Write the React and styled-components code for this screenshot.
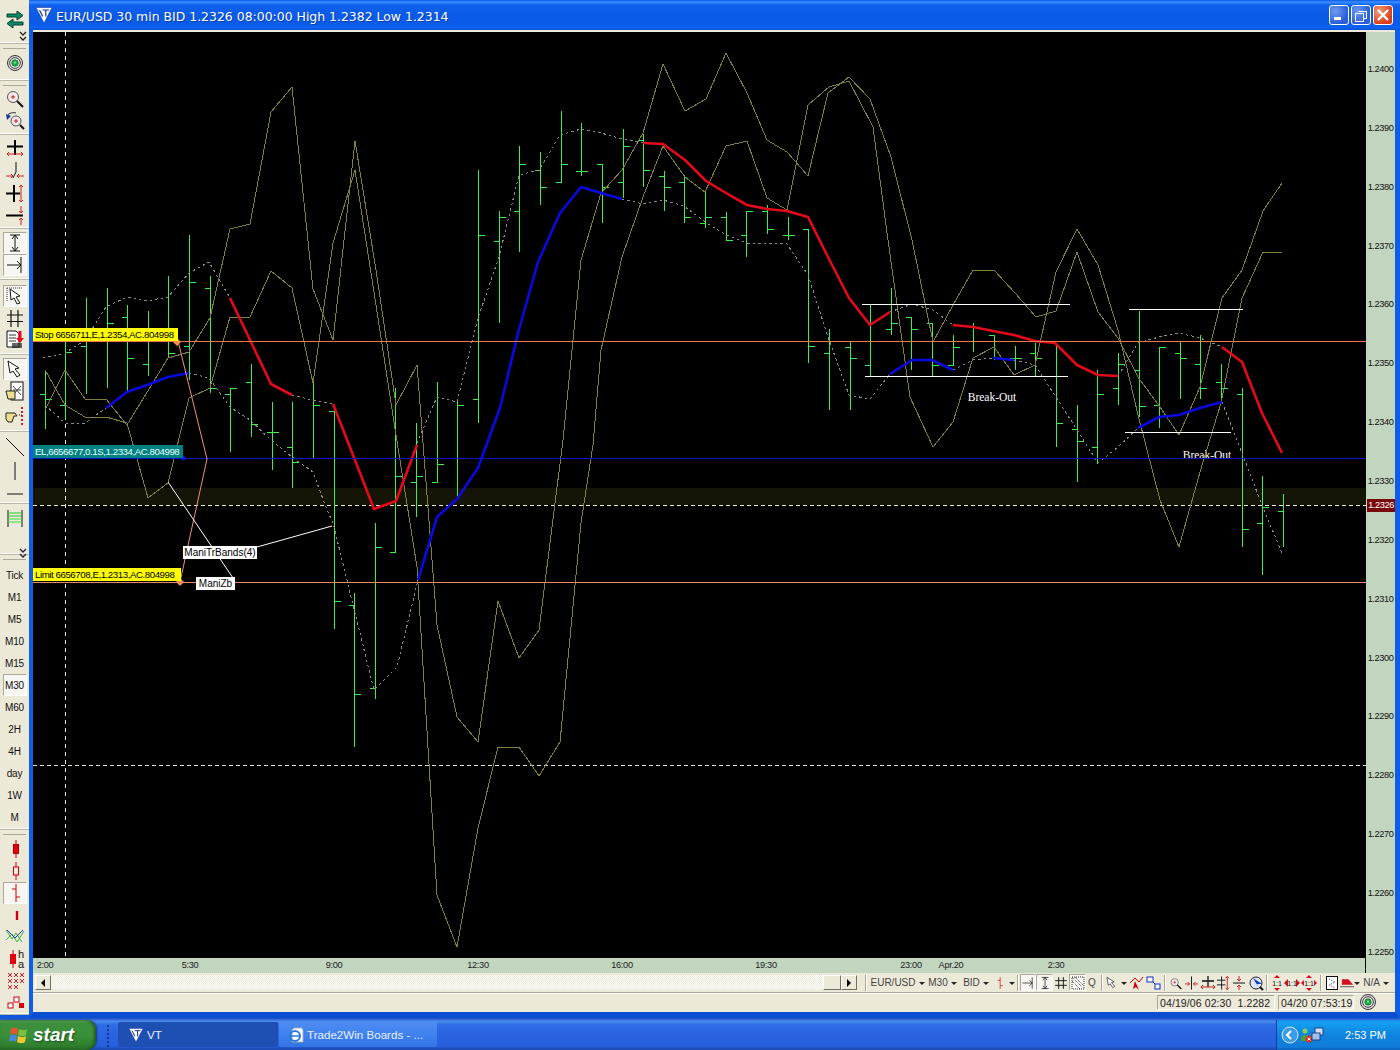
import React from 'react';
import styled, { createGlobalStyle } from 'styled-components';

const Global = createGlobalStyle`
  html, body { margin: 0; padding: 0; background: #000; }
  body { font-family: "Liberation Sans", Arial, sans-serif; }
`;

/* ---------- data ---------- */
const X = (i) => Math.round(44.6 + 20.64 * i) + 0.5;
const bars = [
  [370,429,394,399],[338,420,405,352],[298,394,346,null],[288,388,null,323],[305,392,317,358],[311,376,364,null],[276,358,null,353],[235,380,346,282],
  [276,393,288,388],[388,452,394,388],[364,437,382,424],[402,470,432,432],[402,488,447,462],[377,458,null,405],[411,629,411,601],[593,747,605,694],
  [523,699,688,547],[388,552,552,476],[423,517,482,476],[382,482,482,464],[400,498,null,405],[170,423,399,235],[211,323,241,217],[146,252,211,164],
  [152,205,170,187],[111,182,182,164],[123,176,171,171],[164,223,164,187],[129,198,182,146],[134,187,140,170],[171,211,176,187],[177,223,182,217],
  [192,228,223,217],[212,241,217,240],[211,257,235,211],[205,234,211,229],[217,240,235,235],[229,363,229,346],[329,410,353,null],[342,410,347,358],
  [305,377,365,null],[288,335,329,323],[317,370,317,329],[323,377,323,365],[335,365,365,347],[323,352,null,null],[335,360,335,358],[346,370,358,358],
  [343,377,353,358],[343,447,null,423],[405,482,429,441],[370,464,447,394],[353,405,388,364],[311,417,370,406],[347,428,405,347],[342,399,353,358],
  [335,399,364,388],[364,403,382,388],[388,547,394,529],[476,575,523,507],[494,547,511,null],
];
const pts = (a) => a.map((p) => p.join(',')).join(' ');
const olive = [
  [[45,370],[65,405],[85,417],[106,417],[127,423],[148,498],[168,483],[189,398],[210,388],[230,317],[250,317],[271,271],[292,288],[313,383],[333,243],[355,170],[376,305],[396,435],[417,567],[437,895],[457,947],[478,828],[498,747],[519,747],[539,776],[560,742],[581,523],[593,445],[601,350],[622,257],[643,197],[663,146],[685,177],[705,192],[726,146],[747,141],[767,198],[787,210],[808,105],[829,87],[849,81],[873,127],[888,240],[910,397],[933,447],[953,422],[973,358],[994,347],[1014,375],[1035,365],[1056,272],[1077,229],[1098,265],[1118,330],[1138,415],[1160,500],[1179,547],[1200,472],[1221,403],[1242,298],[1263,252],[1282,252]],
  [[45,410],[65,370],[85,399],[106,399],[127,425],[168,358],[189,352],[210,318],[230,229],[250,224],[271,112],[292,87],[313,289],[333,340],[355,141],[376,270],[396,405],[417,365],[437,625],[457,717],[478,742],[498,601],[519,658],[539,630],[563,440],[581,260],[601,193],[622,170],[643,133],[663,64],[685,111],[706,99],[726,53],[747,93],[767,140],[787,152],[808,176],[828,93],[849,77],[870,99],[891,157],[912,240],[933,342],[953,305],[973,270],[994,270],[1015,293],[1036,317],[1056,311],[1077,252],[1098,312],[1118,338],[1138,377],[1160,407],[1179,435],[1200,387],[1222,298],[1242,270],[1263,211],[1282,183]],
];
const dashed = [
  [[43,358],[65,353],[85,340],[106,307],[127,297],[147,301],[168,297],[189,273],[209,262],[230,298]],
  [[292,395],[312,400],[333,404]],
  [[417,443],[437,397],[457,402],[478,318],[499,257],[519,175],[539,170],[560,135],[581,129],[601,133],[622,139],[643,143]],
  [[890,312],[912,304],[933,310],[953,325]],
  [[1118,376],[1138,343],[1159,337],[1179,333],[1200,338],[1222,347]],
  [[45,405],[65,423],[85,423],[106,408]],
  [[189,373],[209,378],[230,407],[250,420],[271,440],[292,457],[313,472],[327,510],[333,523],[355,613],[374,690],[397,667],[418,580]],
  [[622,199],[643,204],[663,200],[684,206],[705,222],[726,235],[747,243],[787,244],[808,275],[828,337],[849,395],[870,399],[890,374]],
  [[953,370],[973,360],[993,358]],
  [[1014,360],[1035,365],[1056,397],[1077,430],[1098,463],[1118,447],[1138,428]],
  [[1222,402],[1242,453],[1262,505],[1282,553]],
];
const red = [
  [[230,298],[250,340],[271,384],[292,395]],
  [[333,404],[353,455],[374,509],[396,501],[417,445]],
  [[643,143],[663,144],[685,160],[706,181],[726,193],[747,205],[767,209],[787,211],[808,217],[828,257],[849,298],[870,325],[890,312]],
  [[953,325],[973,327],[993,331],[1014,335],[1035,341],[1055,343],[1077,365],[1098,375],[1118,376]],
  [[1222,347],[1242,362],[1262,413],[1282,453]],
];
const blue = [
  [[106,408],[127,392],[147,385],[168,377],[189,373]],
  [[418,580],[437,517],[457,499],[478,468],[500,408],[518,333],[538,262],[560,213],[581,187],[601,193],[622,199]],
  [[890,374],[912,360],[932,360],[953,370]],
  [[993,358],[1014,360]],
  [[1138,428],[1159,417],[1179,415],[1200,408],[1222,402]],
];
const prices = ['1.2400','1.2390','1.2380','1.2370','1.2360','1.2350','1.2340','1.2330','1.2320','1.2310','1.2300','1.2290','1.2280','1.2270','1.2260','1.2250'];
const times = [['2:00',45],['5:30',190],['9:00',334],['12:30',478],['16:00',622],['19:30',766],['23:00',911],['Apr.20',951],['2:30',1056]];

/* ---------- layout ---------- */
const Desktop = styled.div`
  width: 1400px; height: 1050px; overflow: hidden; display: flex; flex-direction: column; background: #0c58e0;
`;
const Workspace = styled.div`display: flex; height: 1018px; flex: none;`;
const SideBar = styled.div`
  width: 29px; height: 1015px; flex: none; background: #ece9d8; display: flex; flex-direction: column;
`;
const SideGroup = styled.div`
  flex: none; height: ${(p) => p.$h}px; padding-top: ${(p) => p.$pt || 0}px; box-sizing: border-box; position: relative;
  display: flex; flex-direction: column; align-items: center;
  border-bottom: 1px solid #b9b6a6; box-shadow: inset 0 -1px 0 #fff;
  ${(p) => p.$grip ? `&::before { content: ""; position: absolute; left: 3px; right: 3px; top: 4px; height: 1px; background: #aca899; }` : ''}
`;
const SideBtn = styled.div`
  width: 24px; height: ${(p) => p.$h || 22}px; flex: none; display: flex; align-items: center; justify-content: center;
  font: 10px "Liberation Sans", Arial, sans-serif; letter-spacing: -.2px; color: #111; box-sizing: border-box;
  ${(p) => p.$on ? 'background:#f7f6f1; border:1px solid; border-color:#aca899 #fff #fff #aca899;' : ''}
`;
const Frame = styled.div`
  flex: 1; min-width: 0; display: flex; flex-direction: column;
  background: #0a56e0; border-left: 4px solid #0f5ce6; border-right: 5px solid #0f5ce6; border-bottom: 6px solid #0a4fd2;
`;
const TitleBar = styled.div`
  height: 30px; margin-left: -4px; margin-right: -5px; padding: 0 7px 0 7px; flex: none; display: flex; align-items: center; gap: 4px;
  background: linear-gradient(180deg,#0a5bea 0,#3b8ffc 7%,#0f62ee 16%,#0a5ae6 55%,#0a5ce8 80%,#0d62f0 92%,#0a50d8 100%);
  color: #fff;
`;
const TitleText = styled.div`
  flex: 1; padding-top: 3px; font: 400 12.44px "DejaVu Sans", Verdana, sans-serif; white-space: pre; text-shadow: 1px 1px 0 #0a3ea8;
`;
const WinButtons = styled.div`display: flex; gap: 2px;`;
const WinButton = styled.div`
  width: 20px; height: 20px; box-sizing: border-box; border: 1px solid #fff; border-radius: 3px; display: flex; align-items: center; justify-content: center;
  background: ${(p) => p.$close ? 'radial-gradient(circle at 30% 30%,#f0a080,#d8401c 70%)' : 'radial-gradient(circle at 30% 30%,#6e9cf0,#2a5ed8 70%)'};
`;
const Content = styled.div`flex: 1; display: flex; flex-direction: column; border-top: 2px solid #ece9d8; background: #ece9d8; min-height: 0;`;
const ChartRow = styled.div`display: flex; height: 926px; flex: none;`;
const ChartPane = styled.div`width: 1333px; height: 926px; position: relative; background: #000; overflow: hidden; flex: none;`;
const ChartSvg = styled.svg`display: block;`;
const OrderTag = styled.div`
  position: absolute; left: 0; top: ${(p) => p.$y - 32}px; width: ${(p) => p.$w}px; box-sizing: border-box; padding-left: 2px; white-space: pre; overflow: hidden;
  font: 9.7px/13px "Liberation Sans", Arial, sans-serif; letter-spacing: -.44px; height: 13px;
  background: ${(p) => p.$bg}; color: ${(p) => p.$fg};
`;
const PlotTag = styled.div`
  position: absolute; left: ${(p) => p.$x - 33}px; top: ${(p) => p.$y - 32}px; width: ${(p) => p.$w}px; height: 13px; background: #fff; color: #000; white-space: pre;
  font: 10px/13px "Liberation Sans", Arial, sans-serif; text-align: center;
`;
const PriceAxis = styled.div`
  width: 29px; flex: none; background: #c1d5bf; position: relative; box-sizing: border-box; padding-top: 31px;
  display: flex; flex-direction: column; justify-content: space-between; align-items: center;
`;
const PriceLabel = styled.div`font: 9.2px/12px "Liberation Sans", Arial, sans-serif; letter-spacing: -.4px; color: #111;`;
const PriceMark = styled.div`
  position: absolute; left: 1px; right: 0; top: 467px; height: 13px; background: #7a0a0a; color: #fff; text-align: center;
  font: 9.2px/13px "Liberation Sans", Arial, sans-serif; letter-spacing: -.4px;
`;
const TimeAxis = styled.div`height: 15px; flex: none; background: #c1d5bf; position: relative;`;
const TimeLabel = styled.div`
  position: absolute; top: 1px; left: ${(p) => p.$x - 33}px; transform: translateX(-50%); font: 9.2px/12px "Liberation Sans", Arial, sans-serif; letter-spacing: -.3px; color: #222;
`;
const AxisCorner = styled.div`position: absolute; left: 1332px; top: 0; bottom: 0; width: 1px; background: #000;`;
const ScrollRow = styled.div`
  height: 20px; flex: none; display: flex; align-items: center; padding-left: 2px; box-sizing: border-box;
  border-bottom: 1px solid #aca899; box-shadow: 0 1px 0 #fff;
`;
const ScrollTrack = styled.div`
  width: 822px; height: 15px; flex: none; display: flex; align-items: stretch; justify-content: space-between;
  background: repeating-conic-gradient(#fff 0 25%, #ece9d8 0 50%) 0 0 / 2px 2px;
`;
const ScrollBtn = styled.div`
  width: 16px; flex: none; display: flex; align-items: center; justify-content: center; box-sizing: border-box; background: #ece9d8;
  border: 1px solid; border-color: #fff #716f64 #716f64 #fff;
`;
const ScrollThumb = styled(ScrollBtn)`width: 18px; margin-left: auto;`;
const ArrowL = styled.span`width: 0; height: 0; border: 4px solid transparent; border-left: 0; border-right: 4px solid #000;`;
const ArrowR = styled.span`width: 0; height: 0; border: 4px solid transparent; border-right: 0; border-left: 4px solid #000;`;
const Tools = styled.div`display: flex; align-items: center; margin-left: 5px; height: 20px;`;
const ToolSep = styled.div`width: 1px; height: 16px; background: #aca899; box-shadow: 1px 0 0 #fff; margin: 0 ${(p) => p.$m || 3}px; flex: none;`;
const ToolItem = styled.div`
  width: ${(p) => p.$w}px; height: 17px; flex: none; display: flex; align-items: center; justify-content: center; gap: ${(p) => p.$gap ?? 3}px; box-sizing: border-box;
  font: 10px "Liberation Sans", Arial, sans-serif; color: #444; white-space: pre;
  ${(p) => p.$on ? 'background:#f7f6f1; border:1px solid; border-color:#aca899 #fff #fff #aca899;' : ''}
`;
const Caret = styled.span`width: 0; height: 0; border: 3px solid transparent; border-bottom: 0; border-top: 3px solid #222; flex: none; margin-top: 1px;`;
const StatusRow = styled.div`flex: 1; display: flex; justify-content: flex-end; align-items: center; gap: 3px; padding: 0 19px 1px 0;`;
const StatusCell = styled.div`
  height: 15px; padding: 0 0 0 2px; box-sizing: border-box; width: ${(p) => p.$w}px; white-space: pre; flex: none; overflow: hidden;
  font: 10.5px/14px "Liberation Sans", Arial, sans-serif; letter-spacing: .1px; color: #222;
  border: 1px solid; border-color: #aca899 #fff #fff #aca899;
`;
const StatusIcon = styled.div`width: 16px; height: 16px; margin-left: 3px; flex: none;`;

/* taskbar */
const Taskbar = styled.div`
  height: 32px; flex: none; display: flex; align-items: stretch; color: #fff; box-sizing: border-box; padding-top: 2px;
  background: linear-gradient(180deg,#1c4fbf 0,#3a6fe0 6%,#4a90ea 10%,#2f6ee4 20%,#2a64e0 50%,#2660dc 88%,#1a47ad 100%);
`;
const StartBtn = styled.div`
  width: 96px; flex: none; display: flex; align-items: center; padding-left: 9px; gap: 4px; box-sizing: border-box;
  background: linear-gradient(180deg,#5aa85a 0,#3c8f3c 12%,#3a913a 50%,#2f7f2f 85%,#276f27 100%); border-radius: 0 9px 9px 0;
  box-shadow: inset -2px 0 3px #1d5a1d, 1px 0 2px #123a8a;
`;
const StartText = styled.span`font: italic 700 19px "Liberation Sans", Arial, sans-serif; text-shadow: 1px 1px 2px #1c4f1c;`;
const Handle = styled.div`width: 2px; margin: 5px 7px 3px 11px; flex: none; border-left: 2px dotted #123a8a;`;
const TaskBtn = styled.div`
  width: ${(p) => p.$w}px; flex: none; margin: 2px 1px 3px 0; display: flex; align-items: center; gap: ${(p) => p.$gap}px; border-radius: 2px; box-sizing: border-box; padding-left: ${(p) => p.$pl}px;
  background: ${(p) => p.$active ? '#1e50b4' : 'linear-gradient(180deg,#4f8cf2,#3c7fee 60%,#3374e4)'};
  font: 11.6px "Liberation Sans", Arial, sans-serif; white-space: pre; color: #e8f0ff;
`;
const Tray = styled.div`
  margin-left: auto; width: 124px; flex: none; display: flex; align-items: center; box-sizing: border-box; padding-left: 4px; gap: 3px;
  background: linear-gradient(180deg,#1590ea 0,#14a0f0 8%,#0f84e0 50%,#0f7cd8 90%,#0c62c0 100%); border-left: 1px solid #0a3a9a;
`;
const Clock = styled.span`margin-left: 17px; font: 11px "Liberation Sans", Arial, sans-serif;`;

/* ---------- icons ---------- */
const Ico = ({ children, w = 24, h = 22, vb }) => <ChartSvg width={w} height={h} viewBox={vb || `0 0 ${w} ${h}`}>{children}</ChartSvg>;
const RedH = ({ y }) => <path d={`M4 ${y}H20M4 ${y}l2-2M4 ${y}l2 2M20 ${y}l-2-2M20 ${y}l-2 2`} stroke="#c8202c" fill="none" />;
const Swap = () => <Ico><polygon points="4,6 14,6 14,3 20,7.5 14,12 14,9 4,9" fill="#0f8a68" stroke="#0a3e30" /><polygon points="20,14 10,14 10,11 4,15.5 10,20 10,17 20,17" fill="#0f8a68" stroke="#0a3e30" /></Ico>;
const Chev = () => <Ico w={24} h={12}><path d="M17 1l3 3 3-3M17 6l3 3 3-3" stroke="#222" strokeWidth="1.3" fill="none" /></Ico>;
const Target = ({ w = 24, h = 22, vb = '0 0 24 22' }) => <Ico w={w} h={h} vb={vb}><circle cx="12" cy="11" r="7.5" fill="#ddd" stroke="#333" /><circle cx="12" cy="11" r="5.3" fill="#fff" stroke="#333" /><circle cx="12" cy="11" r="3.2" fill="#22b14c" stroke="#14702f" /><circle cx="12" cy="10.5" r="1" fill="#7bf08f" /></Ico>;
const ZoomIn = ({ w = 24, h = 22 }) => <Ico w={w} h={h} vb="0 0 24 22"><circle cx="10" cy="10" r="5.5" fill="#f4e8e8" stroke="#555" /><path d="M8 10h4M10 8v4" stroke="#c8202c" /><path d="M14 14l6 6" stroke="#111" strokeWidth="2" /></Ico>;
const ZoomBack = ({ w = 24, h = 22 }) => <Ico w={w} h={h} vb="0 0 24 22"><circle cx="13" cy="12" r="5" fill="#f4e8e8" stroke="#555" /><path d="M11 12h4M13 10v4" stroke="#c8202c" /><path d="M17 16l4 4" stroke="#111" strokeWidth="2" /><path d="M4 7c2-3 6-4 9-3" stroke="#223" fill="none" /><polygon points="3,5 8,7 4,11" fill="#123a9a" /></Ico>;
const Cross1 = () => <Ico><path d="M12 1V16M4 7.5H20" stroke="#000" strokeWidth="2" /><RedH y={15} /></Ico>;
const Narrow = () => <Ico><path d="M13 1V11L10 17" stroke="#111" fill="none" /><path d="M3 15H10M8 13l2 2-2 2M21 15H14M16 13l-2 2 2 2" stroke="#c8202c" fill="none" /></Ico>;
const Cross2 = () => <Ico><path d="M11 2V19M3 10.5H17" stroke="#000" strokeWidth="2" /><path d="M18 2V19M18 2l-2 2M18 2l2 2M18 19l-2-2M18 19l2-2" stroke="#c8202c" fill="none" /></Ico>;
const Cross3 = () => <Ico><path d="M3 10.5H20" stroke="#000" strokeWidth="2" /><path d="M18 1V8M18 8l-2-2M18 8l2-2M18 20V13M18 13l-2 2M18 13l2 2" stroke="#c8202c" fill="none" /></Ico>;
const IBeam = () => <Ico w={20} h={20}><path d="M5 2H15M5 18H15M10 2V18M10 2L7 6M10 2l3 4M10 18l-3-4M10 18l3-4" stroke="#111" fill="none" /></Ico>;
const ArrowLine = () => <Ico w={20} h={20}><path d="M2 10H16M16 2V18M12 6l4 4-4 4" stroke="#111" fill="none" /></Ico>;
const DotCursor = () => <Ico w={20} h={20}><path d="M2 2H18M2 2V16" stroke="#333" strokeDasharray="1 1" fill="none" /><polygon points="5,3 15,10 11,11 15,17 12,18 9,12 6,14" fill="#fff" stroke="#111" /></Ico>;
const Grid = () => <Ico><path d="M8 3V20M15 3V20M4 8H20M4 14.5H20" stroke="#111" strokeWidth="1.2" fill="none" /></Ico>;
const DocArrow = () => <Ico><polygon points="4,2 13,2 16,5 16,18 4,18" fill="#fff" stroke="#111" /><path d="M6 6h7M6 9h7M6 12h7" stroke="#333" /><path d="M17 2V9" stroke="#e01020" strokeWidth="3" /><polygon points="13,9 21,9 17,14" fill="#e01020" /><rect x="9" y="14" width="10" height="5" fill="#222" opacity=".7" /></Ico>;
const Cursor = () => <Ico w={20} h={20}><polygon points="3,2 14,9 10,10 15,16 12,18 8,12 5,14" fill="#fff" stroke="#111" /></Ico>;
const HandDoc = () => <Ico><rect x="8" y="1" width="12" height="18" fill="#fff" stroke="#111" /><path d="M10 5l8 9M18 5l-8 9M10 9h8" stroke="#444" /><path d="M3 10h9v8H5z" fill="#ece090" stroke="#222" /></Ico>;
const HandDots = () => <Ico><path d="M3 8h9l2 3h-3l-2 6H5L3 14z" fill="#ece090" stroke="#222" /><path d="M19 2V20" stroke="#c8202c" strokeWidth="2" strokeDasharray="2 2" /><path d="M16 10h3" stroke="#111" strokeDasharray="1 1" /></Ico>;
const Slant = () => <Ico><path d="M3 2L21 20" stroke="#111" fill="none" /></Ico>;
const VLine = () => <Ico><path d="M12 2V20" stroke="#111" /></Ico>;
const HLine = () => <Ico><path d="M4 11H20" stroke="#111" /></Ico>;
const Channel = () => <Ico><path d="M5 2V19M19 2V19" stroke="#111" /><path d="M5 5H19M5 8H19" stroke="#28c828" /><path d="M5 11H19M5 14H19" stroke="#38e038" /></Ico>;
const Candle = () => <Ico><path d="M13 2V20" stroke="#c80010" /><rect x="10.5" y="6.5" width="5" height="9" fill="#e00010" stroke="#b00" /></Ico>;
const Hollow = () => <Ico><path d="M13 2V20" stroke="#c80010" /><rect x="10.5" y="7" width="5" height="8" fill="#f4e8d8" stroke="#c80010" /></Ico>;
const BarIco = ({ w = 20, h = 20 }) => <Ico w={w} h={h} vb="0 0 20 20"><path d="M11 1V19M11 6H7M11 14H15" stroke="#c80010" fill="none" /></Ico>;
const Small = () => <Ico><path d="M14 7V16" stroke="#c80010" strokeWidth="2.4" /></Ico>;
const Multi = () => <Ico><path d="M3 4l6 9 4-6 6 9M3 14l6-6 5 8 7-11" fill="none" stroke="#38b838" /><path d="M4 4l8 8 8-8" fill="none" stroke="#2030c0" /></Ico>;
const HeikinA = () => <Ico><path d="M10 2V20" stroke="#c80010" /><rect x="7" y="6" width="6" height="10" fill="#e00010" /><text x="15" y="10" fontSize="11" fontFamily="Liberation Sans" fill="#111">h</text><text x="15" y="20" fontSize="11" fontFamily="Liberation Sans" fill="#111">a</text></Ico>;
const Xs = () => <Ico><path d="M5 3l4 4M9 3L5 7M11 3l4 4M15 3l-4 4M17 3l4 4M21 3l-4 4M5 9l4 4M9 9l-4 4M11 9l4 4M15 9l-4 4M17 9l4 4M21 9l-4 4M5 15l4 4M9 15l-4 4M11 15l4 4M15 15l-4 4" stroke="#d0202c" fill="none" /></Ico>;
const Squares = ({ w = 24, h = 22 }) => <Ico w={w} h={h} vb="0 0 24 22"><rect x="5" y="11" width="5" height="5" fill="#fff" stroke="#c80010" /><rect x="11" y="5" width="5" height="5" fill="#fff" stroke="#c80010" /><rect x="16" y="11" width="5" height="5" fill="#d80010" /></Ico>;
const Dotted = () => <Ico w={14} h={14}><path d="M1 1h12v12H1zM1 1l10 10M4 1l8 8M1 5l8 8" stroke="#333" strokeDasharray="1 1" fill="none" /></Ico>;
const RedArrows = () => <Ico w={15} h={16}><path d="M1 8l5-5 4 4 4-5" stroke="#c80010" fill="none" /><polygon points="6,6 10,15 7,12 4,14" fill="#c80010" /></Ico>;
const BlueSq = () => <Ico w={15} h={16}><rect x="1" y="2" width="6" height="5" fill="#fff" stroke="#1030c0" /><path d="M7 7l2 2" stroke="#1030c0" /><rect x="9" y="9" width="5" height="5" fill="#fff" stroke="#1030c0" /></Ico>;
const InOut = () => <Ico w={16} h={16}><path d="M8 1V15" stroke="#111" /><path d="M1 9H6M4 7l2 2-2 2M15 9H10M12 7l-2 2 2 2" stroke="#c8202c" fill="none" /></Ico>;
const CrossH = () => <Ico w={16} h={16}><path d="M8 1V12M2 6H14" stroke="#111" strokeWidth="1.3" /><path d="M1 12H15M1 12l2-2M1 12l2 2M15 12l-2-2M15 12l-2 2" stroke="#c8202c" fill="none" /></Ico>;
const CrossV = () => <Ico w={16} h={16}><path d="M6 1V15M1 5H10M1 10H10" stroke="#111" /><path d="M12 1V15M12 1l-2 2M12 1l2 2M12 15l-2-2M12 15l2-2" stroke="#c8202c" fill="none" /></Ico>;
const CrossIn = () => <Ico w={16} h={16}><path d="M2 8H14" stroke="#111" /><path d="M8 1V6M8 6L6 4M8 6l2-2M8 15V10M8 10l-2 2M8 10l2 2" stroke="#c8202c" fill="none" /></Ico>;
const ZoomArrow = () => <Ico w={16} h={16}><circle cx="8" cy="8" r="6" fill="#dde8ff" stroke="#222" /><path d="M12 12l3 3" stroke="#111" strokeWidth="2" /><polygon points="5,3 14,9 9,9 11,13" fill="#1040c0" /></Ico>;
const Vert11 = () => <Ico w={14} h={16}><polygon points="7,0 10,3 4,3" fill="#d01020" /><polygon points="7,16 10,13 4,13" fill="#d01020" /><text x="7" y="11" textAnchor="middle" fontSize="7" fontFamily="Liberation Sans" fill="#111">1:1</text></Ico>;
const Horz11 = () => <Ico w={16} h={14}><polygon points="0,7 4,3 4,11" fill="#d01020" /><polygon points="16,7 12,3 12,11" fill="#d01020" /><text x="8" y="10" textAnchor="middle" fontSize="7" fontFamily="Liberation Sans" fill="#111">1:1</text></Ico>;
const All11 = () => <Ico w={16} h={16}><polygon points="0,8 3,5 3,11" fill="#d01020" /><polygon points="16,8 13,5 13,11" fill="#d01020" /><polygon points="8,0 5,3 11,3" fill="#d01020" /><polygon points="8,16 5,13 11,13" fill="#d01020" /><text x="8" y="11" textAnchor="middle" fontSize="7" fontFamily="Liberation Sans" fill="#111">1:1</text></Ico>;
const DocSm = () => <Ico w={14} h={16}><rect x="1.5" y="1.5" width="11" height="13" fill="#fff" stroke="#111" /><path d="M4 4l6 3-6 3 6 3" stroke="#555" strokeDasharray="1 1" fill="none" /></Ico>;
const RedFlag = () => <Ico w={15} h={16}><path d="M0 12H15" stroke="#555" /><polygon points="2,4 9,4 14,10 2,10" fill="#d01020" /></Ico>;
const VtLogo = ({ s = 16, ink = '#0a2a90' }) => <Ico w={s} h={s} vb="0 0 16 16"><polygon points="0,.5 16,.5 8,16" fill="#fff" stroke={ink} strokeWidth=".5" /><path d="M3.5 3l3.2 6.5M6.5 3h6.5M9.8 3v6.5" stroke={ink} strokeWidth="1.1" fill="none" /></Ico>;
const Flag = () => <Ico w={20} h={20}><path d="M2 4c3-2 5-1 7 0l-1 6c-2-1-4-2-7 0z" fill="#e4572c" /><path d="M10 4c2 1 5 2 8 0l-1 6c-3 2-6 1-8 0z" fill="#7cc040" /><path d="M1 11c3-2 5-1 7 0l-1 6c-2-1-4-2-7 0z" fill="#4a86e0" /><path d="M9 11c2 1 5 2 8 0l-1 6c-3 2-6 1-8 0z" fill="#f8c830" /></Ico>;
const IeDoc = () => <Ico w={16} h={16}><polygon points="6,1 14,1 15,3 15,15 4,15 4,3" fill="#fff" stroke="#9ab" /><circle cx="7" cy="9" r="5" fill="none" stroke="#2a78e0" strokeWidth="2" /><path d="M3 9h8" stroke="#2a78e0" strokeWidth="1.5" /></Ico>;
const TrayIcons = () => (
  <Ico w={44} h={20}>
    <circle cx="9" cy="10" r="8" fill="#3a9ce8" stroke="#fff" strokeWidth=".8" />
    <path d="M10 6l-4 4 4 4" stroke="#fff" strokeWidth="2" fill="none" />
    <circle cx="24" cy="6" r="2.5" fill="#8ad060" /><path d="M20 13c0-4 8-4 8 0v3h-8z" fill="#50a040" />
    <circle cx="28" cy="14" r="3.5" fill="#d83020" /><path d="M26.5 12.5l3 3M29.5 12.5l-3 3" stroke="#fff" />
    <rect x="34" y="3" width="8" height="7" fill="#d0e0ff" stroke="#204080" /><rect x="31" y="8" width="8" height="7" fill="#a0c0f0" stroke="#204080" />
  </Ico>
);

/* ---------- chart ---------- */
const Chart = () => (
  <ChartSvg width="1333" height="926" viewBox="33 32 1333 926">
    <rect x="33" y="488" width="1333" height="17" fill="#151507" />
    <text x="992" y="401" fontFamily="Liberation Serif" fontSize="11.5" fill="#fff" textAnchor="middle">Break-Out</text>
    <text x="1207" y="459" fontFamily="Liberation Serif" fontSize="11.5" fill="#fff" textAnchor="middle">Break-Out</text>
    <path d="M65.5 32V957" stroke="#e8e8e8" strokeDasharray="4 4" shapeRendering="crispEdges" />
    <path d="M33 505.5H1366" stroke="#f0f0c8" strokeDasharray="4 3" shapeRendering="crispEdges" />
    <path d="M33 765.5H1366" stroke="#e0e0d0" strokeDasharray="4 3" shapeRendering="crispEdges" />
    <g stroke="#3cf048" strokeWidth="1.2" shapeRendering="crispEdges" fill="none">
      {bars.map((b, i) => {
        const x = X(i);
        return (
          <g key={i}>
            <path d={`M${x} ${b[0]}V${b[1]}`} />
            {b[2] != null && <path d={`M${x - 6} ${b[2] + 0.5}H${x}`} />}
            {b[3] != null && <path d={`M${x} ${b[3] + 0.5}H${x + 6}`} />}
          </g>
        );
      })}
    </g>
    {olive.map((l, i) => <polyline key={i} points={pts(l)} fill="none" stroke="#808038" strokeWidth="1" shapeRendering="crispEdges" />)}
    {dashed.map((l, i) => <polyline key={i} points={pts(l)} fill="none" stroke="#8c8c8c" strokeWidth="1" strokeDasharray="2.5 3" shapeRendering="crispEdges" />)}
    {red.map((l, i) => <polyline key={i} points={pts(l)} fill="none" stroke="#e40a18" strokeWidth="2.6" strokeLinejoin="round" />)}
    {blue.map((l, i) => <polyline key={i} points={pts(l)} fill="none" stroke="#0a0ae0" strokeWidth="2.6" strokeLinejoin="round" />)}
    <path d="M33 341.5H1366" stroke="#f07850" shapeRendering="crispEdges" />
    <path d="M33 582.5H1366" stroke="#e88868" shapeRendering="crispEdges" />
    <path d="M33 458.5H1366" stroke="#0a14c8" shapeRendering="crispEdges" />
    <polyline points="178,341 207,459 180,582" fill="none" stroke="#f09080" />
    <path d="M168 482L233 578M332 526L257 547" stroke="#fff" fill="none" />
    <path d="M862 304.5H1070M865 376.5H1068M1129 309.5H1243M1125 432.5H1231" stroke="#fff" shapeRendering="crispEdges" />
    <polygon points="177,338 181,342 177,346 173,342" fill="#f09050" />
    <polygon points="180,578 184,582 180,586 176,582" fill="#f09050" />
    <circle cx="183" cy="458" r="2.5" fill="#0a14d8" />
  </ChartSvg>
);

const Side = () => (
  <SideBar>
    <SideGroup $h={44} $pt={7}><SideBtn $h={24}><Swap /></SideBtn><SideBtn $h={12}><Chev /></SideBtn></SideGroup>
    <SideGroup $h={37} $pt={8} $grip><SideBtn><Target /></SideBtn></SideGroup>
    <SideGroup $h={54} $pt={6} $grip><SideBtn><ZoomIn /></SideBtn><SideBtn><ZoomBack /></SideBtn></SideGroup>
    <SideGroup $h={94} $pt={4}><SideBtn><Cross1 /></SideBtn><SideBtn><Narrow /></SideBtn><SideBtn><Cross2 /></SideBtn><SideBtn><Cross3 /></SideBtn></SideGroup>
    <SideGroup $h={51} $pt={3}><SideBtn $on><IBeam /></SideBtn><SideBtn $on><ArrowLine /></SideBtn></SideGroup>
    <SideGroup $h={75} $pt={5}><SideBtn $on><DotCursor /></SideBtn><SideBtn><Grid /></SideBtn><SideBtn><DocArrow /></SideBtn></SideGroup>
    <SideGroup $h={77} $pt={3}><SideBtn $on><Cursor /></SideBtn><SideBtn $h={24}><HandDoc /></SideBtn><SideBtn $h={24}><HandDots /></SideBtn></SideGroup>
    <SideGroup $h={72} $pt={3}><SideBtn $h={24}><Slant /></SideBtn><SideBtn $h={24}><VLine /></SideBtn><SideBtn $h={22}><HLine /></SideBtn></SideGroup>
    <SideGroup $h={51} $pt={4}><SideBtn><Channel /></SideBtn><SideBtn $h={18} /><SideBtn $h={12}><Chev /></SideBtn></SideGroup>
    <SideGroup $h={275} $pt={9} $grip>
      {['Tick', 'M1', 'M5', 'M10', 'M15'].map((t) => <SideBtn key={t}>{t}</SideBtn>)}
      <SideBtn $on>M30</SideBtn>
      {['M60', '2H', '4H', 'day', '1W', 'M'].map((t) => <SideBtn key={t}>{t}</SideBtn>)}
    </SideGroup>
    <SideGroup $h={185} $pt={8} $grip>
      <SideBtn><Candle /></SideBtn><SideBtn><Hollow /></SideBtn><SideBtn $on><BarIco /></SideBtn><SideBtn><Small /></SideBtn>
      <SideBtn><Multi /></SideBtn><SideBtn><HeikinA /></SideBtn><SideBtn><Xs /></SideBtn><SideBtn><Squares /></SideBtn>
    </SideGroup>
  </SideBar>
);

const BottomTools = () => (
  <Tools>
    <ToolSep $m={3} />
    <ToolItem $w={57}>EUR/USD<Caret /></ToolItem>
    <ToolItem $w={33}>M30<Caret /></ToolItem>
    <ToolItem $w={34}>BID<Caret /></ToolItem>
    <ToolItem $w={22}><BarIco w={14} h={16} /><Caret /></ToolItem>
    <ToolSep $m={2} />
    <ToolItem $w={16} $on><Ico w={14} h={14} vb="0 0 20 20"><path d="M2 10H16M16 2V18M12 6l4 4-4 4" stroke="#111" fill="none" /></Ico></ToolItem>
    <ToolItem $w={17} $on><Ico w={14} h={14} vb="0 0 20 20"><path d="M5 2H15M5 18H15M10 2V18M10 2L7 6M10 2l3 4M10 18l-3-4M10 18l3-4" stroke="#111" fill="none" /></Ico></ToolItem>
    <ToolItem $w={16}><Ico w={14} h={14} vb="0 0 24 22"><path d="M8 1V21M16 1V21M2 7H22M2 15H22" stroke="#111" strokeWidth="1.6" fill="none" /></Ico></ToolItem>
    <ToolItem $w={17} $on><Dotted /></ToolItem>
    <ToolItem $w={12}>Q</ToolItem>
    <ToolSep $m={3} />
    <ToolItem $w={22}><Ico w={13} h={15} vb="0 0 20 20"><polygon points="3,2 14,9 10,10 15,16 12,18 8,12 5,14" fill="#fff" stroke="#111" /></Ico><Caret /></ToolItem>
    <ToolItem $w={18}><RedArrows /></ToolItem>
    <ToolItem $w={16}><BlueSq /></ToolItem>
    <ToolSep $m={3} />
    <ToolItem $w={16}><ZoomIn w={16} h={16} /></ToolItem>
    <ToolItem $w={15}><InOut /></ToolItem>
    <ToolItem $w={17}><CrossH /></ToolItem>
    <ToolItem $w={15}><CrossV /></ToolItem>
    <ToolItem $w={16}><CrossIn /></ToolItem>
    <ToolItem $w={17}><ZoomArrow /></ToolItem>
    <ToolSep $m={2} />
    <ToolItem $w={15}><Vert11 /></ToolItem>
    <ToolItem $w={16}><Horz11 /></ToolItem>
    <ToolItem $w={17}><All11 /></ToolItem>
    <ToolSep $m={3} />
    <ToolItem $w={16}><DocSm /></ToolItem>
    <ToolItem $w={20} $gap={0}><RedFlag /><Caret /></ToolItem>
    <ToolItem $w={32}>N/A<Caret /></ToolItem>
  </Tools>
);

export default function App() {
  return (
    <Desktop>
      <Global />
      <Workspace>
        <Side />
        <Frame>
          <TitleBar>
            <VtLogo s={16} />
            <TitleText>EUR/USD 30 min BID 1.2326 08:00:00 High 1.2382 Low 1.2314</TitleText>
            <WinButtons>
              <WinButton><Ico w={12} h={12}><rect x="1" y="8" width="7" height="3" fill="#fff" /></Ico></WinButton>
              <WinButton><Ico w={14} h={14}><path d="M4.5 3.5h8v7h-3M1.5 5.5h8v8h-8z" stroke="#fff" fill="none" /></Ico></WinButton>
              <WinButton $close><Ico w={14} h={14}><path d="M2 2l10 10M12 2L2 12" stroke="#fff" strokeWidth="2.2" /></Ico></WinButton>
            </WinButtons>
          </TitleBar>
          <Content>
            <ChartRow>
              <ChartPane>
                <Chart />
                <OrderTag $bg="#ffff00" $fg="#000" $y={328} $w={145}>Stop 6656711,E,1.2354,AC.804998</OrderTag>
                <OrderTag $bg="#008080" $fg="#e8ffff" $y={445} $w={150}>EL,6656677,0.1S,1.2334,AC.804998</OrderTag>
                <OrderTag $bg="#ffff00" $fg="#000" $y={568} $w={148}>Limit 6656708,E,1.2313,AC.804998</OrderTag>
                <PlotTag $x={183} $y={546} $w={74}>ManiTrBands(4)</PlotTag>
                <PlotTag $x={196} $y={577} $w={39}>ManiZb</PlotTag>
              </ChartPane>
              <PriceAxis>
                {prices.map((p) => <PriceLabel key={p}>{p}</PriceLabel>)}
                <PriceMark>1.2326</PriceMark>
              </PriceAxis>
            </ChartRow>
            <TimeAxis>
              {times.map(([t, x]) => <TimeLabel key={t} $x={x}>{t}</TimeLabel>)}
              <AxisCorner />
            </TimeAxis>
            <ScrollRow>
              <ScrollTrack>
                <ScrollBtn><ArrowL /></ScrollBtn>
                <ScrollThumb />
                <ScrollBtn><ArrowR /></ScrollBtn>
              </ScrollTrack>
              <BottomTools />
            </ScrollRow>
            <StatusRow>
              <StatusCell $w={118}>04/19/06 02:30  1.2282</StatusCell>
              <StatusCell $w={76}>04/20 07:53:19</StatusCell>
              <StatusIcon><Target w={16} h={16} vb="4 3 16 16" /></StatusIcon>
            </StatusRow>
          </Content>
        </Frame>
      </Workspace>
      <Taskbar>
        <StartBtn><Flag /><StartText>start</StartText></StartBtn>
        <Handle />
        <TaskBtn $w={160} $pl={11} $gap={4} $active><VtLogo s={14} />VT</TaskBtn>
        <TaskBtn $w={158} $pl={9} $gap={3}><IeDoc />Trade2Win Boards - ...</TaskBtn>
        <Tray><TrayIcons /><Clock>2:53 PM</Clock></Tray>
      </Taskbar>
    </Desktop>
  );
}
